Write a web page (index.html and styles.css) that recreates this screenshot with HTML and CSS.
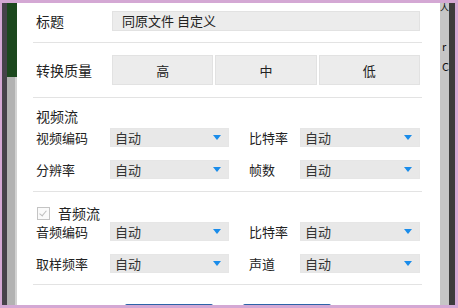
FILE: index.html
```html
<!DOCTYPE html>
<html lang="zh-CN">
<head>
    <meta charset="UTF-8">
    <meta name="viewport" content="width=device-width, initial-scale=1.0">
    <title>转换设置</title>
    <link rel="stylesheet" href="styles.css">
</head>
<body>
    <div class="screen">
        <div class="side-left">
            <div class="edge"></div>
            <div class="app">
                <div class="app-top"></div>
                <div class="app-bottom"></div>
            </div>
        </div>

        <div class="dialog">
            <div class="field-row title-row">
                <span class="label">标题</span>
                <div class="text-input">同原文件 自定义</div>
            </div>
            <hr class="divider">

            <div class="field-row quality-row">
                <span class="label">转换质量</span>
                <div class="segments">
                    <button class="segment">高</button>
                    <button class="segment">中</button>
                    <button class="segment">低</button>
                </div>
            </div>
            <hr class="divider">

            <section class="group">
                <div class="group-title">视频流</div>
                <div class="grid">
                    <span class="row-label">视频编码</span>
                    <div class="select">自动<span class="arrow"></span></div>
                    <span class="row-label second">比特率</span>
                    <div class="select">自动<span class="arrow"></span></div>

                    <span class="row-label">分辨率</span>
                    <div class="select">自动<span class="arrow"></span></div>
                    <span class="row-label second">帧数</span>
                    <div class="select">自动<span class="arrow"></span></div>
                </div>
            </section>
            <hr class="divider">

            <section class="group">
                <label class="group-title check-title">
                    <span class="checkbox"><span class="tick"></span></span>音频流
                </label>
                <div class="grid">
                    <span class="row-label">音频编码</span>
                    <div class="select">自动<span class="arrow"></span></div>
                    <span class="row-label second">比特率</span>
                    <div class="select">自动<span class="arrow"></span></div>

                    <span class="row-label">取样频率</span>
                    <div class="select">自动<span class="arrow"></span></div>
                    <span class="row-label second">声道</span>
                    <div class="select">自动<span class="arrow"></span></div>
                </div>
            </section>
            <hr class="divider last">

            <!-- OK / Cancel buttons, only their top edge shows -->
            <div class="footer">
                <button class="btn-primary"></button>
                <button class="btn-primary"></button>
            </div>
        </div>

        <div class="side-right">
            <div class="behind">
                <span class="peek peek-top">人</span>
                <span class="peek peek-r">r</span>
                <span class="peek peek-c">C</span>
            </div>
            <div class="edge"></div>
        </div>
    </div>
</body>
</html>
```

FILE: styles.css
```css
body {
    margin: 0;
    font-family: "Noto Sans CJK SC", "Liberation Sans", sans-serif;
    color: #222;
}
.screen {
    width: 458px;
    height: 308px;
    box-sizing: border-box;
    padding: 3px 3px 3px 2px;
    background-color: #d4a8d4;
    display: flex;
}

/* strips of the windows behind */
.side-left {
    width: 15px;
    display: flex;
}
.side-left .edge {
    width: 5px;
    background-color: #46424a;
}
.app {
    flex: 1;
    display: flex;
    flex-direction: column;
}
.app-top {
    height: 74px;
    background-color: #1c481e;
}
.app-bottom {
    flex: 1;
    background-color: #b2b2b2;
    border-right: 2px solid #d2d2d2;
}
.side-right {
    width: 15px;
    display: flex;
}
.behind {
    width: 9px;
    background-color: #c6c6c6;
    position: relative;
    overflow: hidden;
}
.side-right .edge {
    flex: 1;
    background-color: #3c3c3c;
}
.peek {
    position: absolute;
    left: 1px;
    font-size: 11px;
    line-height: 11px;
    color: #111;
}
.peek-top { top: 0; left: 0; font-size: 9px; line-height: 9px; }
.peek-r { top: 38px; left: 2px; }
.peek-c { top: 58px; left: 2px; }

/* dialog */
.dialog {
    flex: 1;
    background: white;
    padding: 8px 20px 0 19px;
    overflow: hidden;
}
.field-row {
    display: flex;
    align-items: center;
}
.label {
    width: 76px;
    font-size: 14px;
    line-height: 20px;
}
.text-input {
    flex: 1;
    height: 20px;
    box-sizing: border-box;
    padding-left: 9px;
    background-color: #ececec;
    border: 1px solid #e2e2e2;
    font-size: 13px;
    line-height: 18px;
}
.divider {
    border: none;
    border-top: 1px solid #e3e3e3;
    margin: 11px -2px 12px -3px;
}
.segments {
    flex: 1;
    display: flex;
    gap: 2px;
}
.segment {
    flex: 1;
    height: 30px;
    background-color: #ececec;
    border: 1px solid #e2e2e2;
    font-family: inherit;
    font-size: 13px;
    color: #222;
    padding: 0;
}
.quality-row + .divider {
    margin-top: 12px;
    margin-bottom: 8px;
}

/* stream groups */
.group-title {
    font-size: 14px;
    line-height: 20px;
    margin-bottom: 2px;
}
.check-title {
    display: flex;
    align-items: center;
    line-height: 18px;
    margin-bottom: 0;
}
.checkbox {
    width: 11px;
    height: 11px;
    border: 1px solid #c4c4c4;
    background: #fafafa;
    margin: 0 8px 0 1px;
    position: relative;
}
.tick {
    position: absolute;
    left: 3px;
    top: 1px;
    width: 3px;
    height: 6px;
    border: solid #bdbdbd;
    border-width: 0 1px 1px 0;
    transform: rotate(40deg);
}
.grid {
    display: grid;
    grid-template-columns: 74px 119px 71px 120px;
    grid-auto-rows: 19px;
    row-gap: 13px;
    align-items: center;
}
.row-label {
    font-size: 13px;
    line-height: 19px;
}
.row-label.second {
    padding-left: 20px;
}
.select {
    height: 19px;
    box-sizing: border-box;
    padding-left: 4px;
    background-color: #e8e8e8;
    border: 1px solid #e6e6e6;
    font-size: 13px;
    line-height: 17px;
    color: #333;
    display: flex;
    justify-content: space-between;
    align-items: center;
}
.arrow {
    width: 0;
    height: 0;
    margin-right: 7px;
    border-left: 4px solid transparent;
    border-right: 4px solid transparent;
    border-top: 5px solid #1a8cea;
}
.group + .divider {
    margin-top: 12px;
    margin-bottom: 12px;
}
.divider.last {
    margin-top: 11px;
    margin-bottom: 19px;
}

.footer {
    display: flex;
    justify-content: center;
    gap: 30px;
}
.btn-primary {
    width: 88px;
    height: 28px;
    background-color: #3b78c4;
    border: none;
    border-top: 2px solid #2d64a8;
    border-radius: 2px 2px 0 0;
}
```
